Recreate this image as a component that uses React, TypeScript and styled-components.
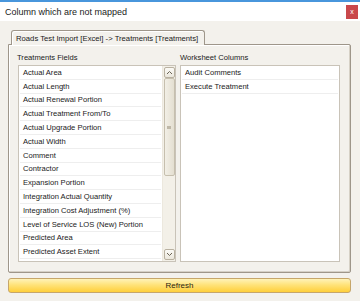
import React from "react";
import styled, { createGlobalStyle } from "styled-components";

const Global = createGlobalStyle`
  html, body { margin: 0; padding: 0; background: #f3f1ec; }
  body { font-family: "Liberation Sans", Arial, sans-serif; }
`;

const Window = styled.div`
  width: 360px;
  height: 301px;
  display: flex;
  flex-direction: column;
  background: #f3f1ec;
  overflow: hidden;
`;

const TitleBar = styled.div`
  height: 19px;
  border-top: 2px solid #4896dc;
  background: #ffffff;
  display: flex;
  align-items: center;
  justify-content: space-between;
  padding: 0 2px 0 5px;
  font-size: 9px;
  color: #1a1a1a;
`;

const CloseButton = styled.div`
  width: 12px;
  height: 14px;
  background: #c9484b;
  color: #fff;
  font-size: 7px;
  display: flex;
  align-items: center;
  justify-content: center;
  line-height: 1;
`;

const Body = styled.div`
  flex: 1;
  display: flex;
  flex-direction: column;
  padding: 9px 9px 0 8px;
`;

const TabStrip = styled.div`
  display: flex;
  padding-left: 3px;
  position: relative;
  z-index: 1;
  margin-bottom: -1px;
`;

const Tab = styled.div`
  height: 15px;
  width: 194px;
  box-sizing: border-box;
  padding: 0 4px;
  border: 1px solid #9e968a;
  border-bottom: none;
  border-radius: 3px 3px 0 0;
  background: #f3f1ec;
  display: flex;
  align-items: center;
  font-size: 7.7px;
  color: #1a1a1a;
  white-space: nowrap;
  box-shadow: inset 1px 1px 0 #ffffff;
`;

const Panel = styled.div`
  height: 229px;
  box-sizing: border-box;
  border: 1px solid #9e968a;
  border-radius: 0 2px 2px 2px;
  box-shadow: inset -1px -1px 0 #d6d1c6, inset 1px 1px 0 #ffffff;
  display: grid;
  grid-template-columns: 159px 160px;
  column-gap: 4px;
  padding: 7px 9px 10px 8px;
`;

const Column = styled.div`
  display: flex;
  flex-direction: column;
  gap: 2px;
  min-height: 0;
`;

const Label = styled.div`
  height: 11px;
  font-size: 7.6px;
  line-height: 11px;
  color: #1a1a1a;
`;

const ListBox = styled.div<{ $inset?: number }>`
  flex: 1;
  display: flex;
  margin-left: ${(p) => p.$inset ?? 0}px;
  border: 1px solid #c9c3b8;
  background: #ffffff;
  min-height: 0;
`;

const Rows = styled.div`
  flex: 1;
  display: flex;
  flex-direction: column;
  padding: 0 1px;
  overflow: hidden;
`;

const Row = styled.div`
  height: 13.8px;
  flex: none;
  box-sizing: border-box;
  border-bottom: 1px solid #eeeeee;
  padding-left: 3px;
  display: flex;
  align-items: center;
  font-size: 7.6px;
  color: #1a1a1a;
  white-space: nowrap;
`;

const ScrollBar = styled.div`
  width: 13px;
  flex: none;
  background: #f3f0e8;
  border-left: 1px solid #ece8de;
  display: flex;
  flex-direction: column;
  align-items: center;
  padding: 1px 0;
  box-sizing: border-box;
`;

const ArrowButton = styled.div`
  width: 11px;
  height: 11px;
  box-sizing: border-box;
  border: 1px solid #b9b1a1;
  border-radius: 2px;
  background: linear-gradient(#fbfaf6, #ebe7dc);
  display: flex;
  align-items: center;
  justify-content: center;
  flex: none;
`;

const Thumb = styled.div`
  width: 11px;
  height: 98px;
  box-sizing: border-box;
  border: 1px solid #c6bfae;
  border-radius: 2px;
  background: linear-gradient(90deg, #f2efe6, #e4dfd1);
  display: flex;
  align-items: center;
  justify-content: center;
  flex: none;
`;

const Grip = styled.div`
  width: 4px;
  height: 3px;
  background: #bfb8a8;
`;

const Track = styled.div`
  flex: 1;
`;

const RefreshButton = styled.div`
  margin-top: 5px;
  height: 15px;
  width: 343px;
  box-sizing: border-box;
  border: 1px solid #c6a66a;
  border-radius: 3px;
  background: linear-gradient(#fff3b8 0%, #ffe37a 45%, #ffcf3a 100%);
  display: flex;
  align-items: center;
  justify-content: center;
  font-size: 8px;
  color: #2a2410;
`;

const Chevron = ({ up }: { up?: boolean }) => (
  <svg width="7" height="5" viewBox="0 0 7 5">
    <path
      d={up ? "M1 4 L3.5 1.5 L6 4" : "M1 1 L3.5 3.5 L6 1"}
      fill="none"
      stroke="#6b6456"
      strokeWidth="1"
    />
  </svg>
);

const fields = [
  "Actual Area",
  "Actual Length",
  "Actual Renewal Portion",
  "Actual Treatment From/To",
  "Actual Upgrade Portion",
  "Actual Width",
  "Comment",
  "Contractor",
  "Expansion Portion",
  "Integration Actual Quantity",
  "Integration Cost Adjustment (%)",
  "Level of Service LOS (New) Portion",
  "Predicted Area",
  "Predicted Asset Extent",
];

const columns = ["Audit Comments", "Execute Treatment"];

export default function App() {
  return (
    <>
      <Global />
      <Window>
        <TitleBar>
          <span>Column which are not mapped</span>
          <CloseButton>x</CloseButton>
        </TitleBar>
        <Body>
          <TabStrip>
            <Tab>Roads Test Import [Excel] -&gt; Treatments [Treatments]</Tab>
          </TabStrip>
          <Panel>
            <Column>
              <Label>Treatments Fields</Label>
              <ListBox $inset={1}>
                <Rows>
                  {fields.map((f) => (
                    <Row key={f}>{f}</Row>
                  ))}
                </Rows>
                <ScrollBar>
                  <ArrowButton>
                    <Chevron up />
                  </ArrowButton>
                  <Thumb>
                    <Grip />
                  </Thumb>
                  <Track />
                  <ArrowButton>
                    <Chevron />
                  </ArrowButton>
                </ScrollBar>
              </ListBox>
            </Column>
            <Column>
              <Label>Worksheet Columns</Label>
              <ListBox>
                <Rows>
                  {columns.map((c) => (
                    <Row key={c}>{c}</Row>
                  ))}
                </Rows>
              </ListBox>
            </Column>
          </Panel>
          <RefreshButton>Refresh</RefreshButton>
        </Body>
      </Window>
    </>
  );
}
